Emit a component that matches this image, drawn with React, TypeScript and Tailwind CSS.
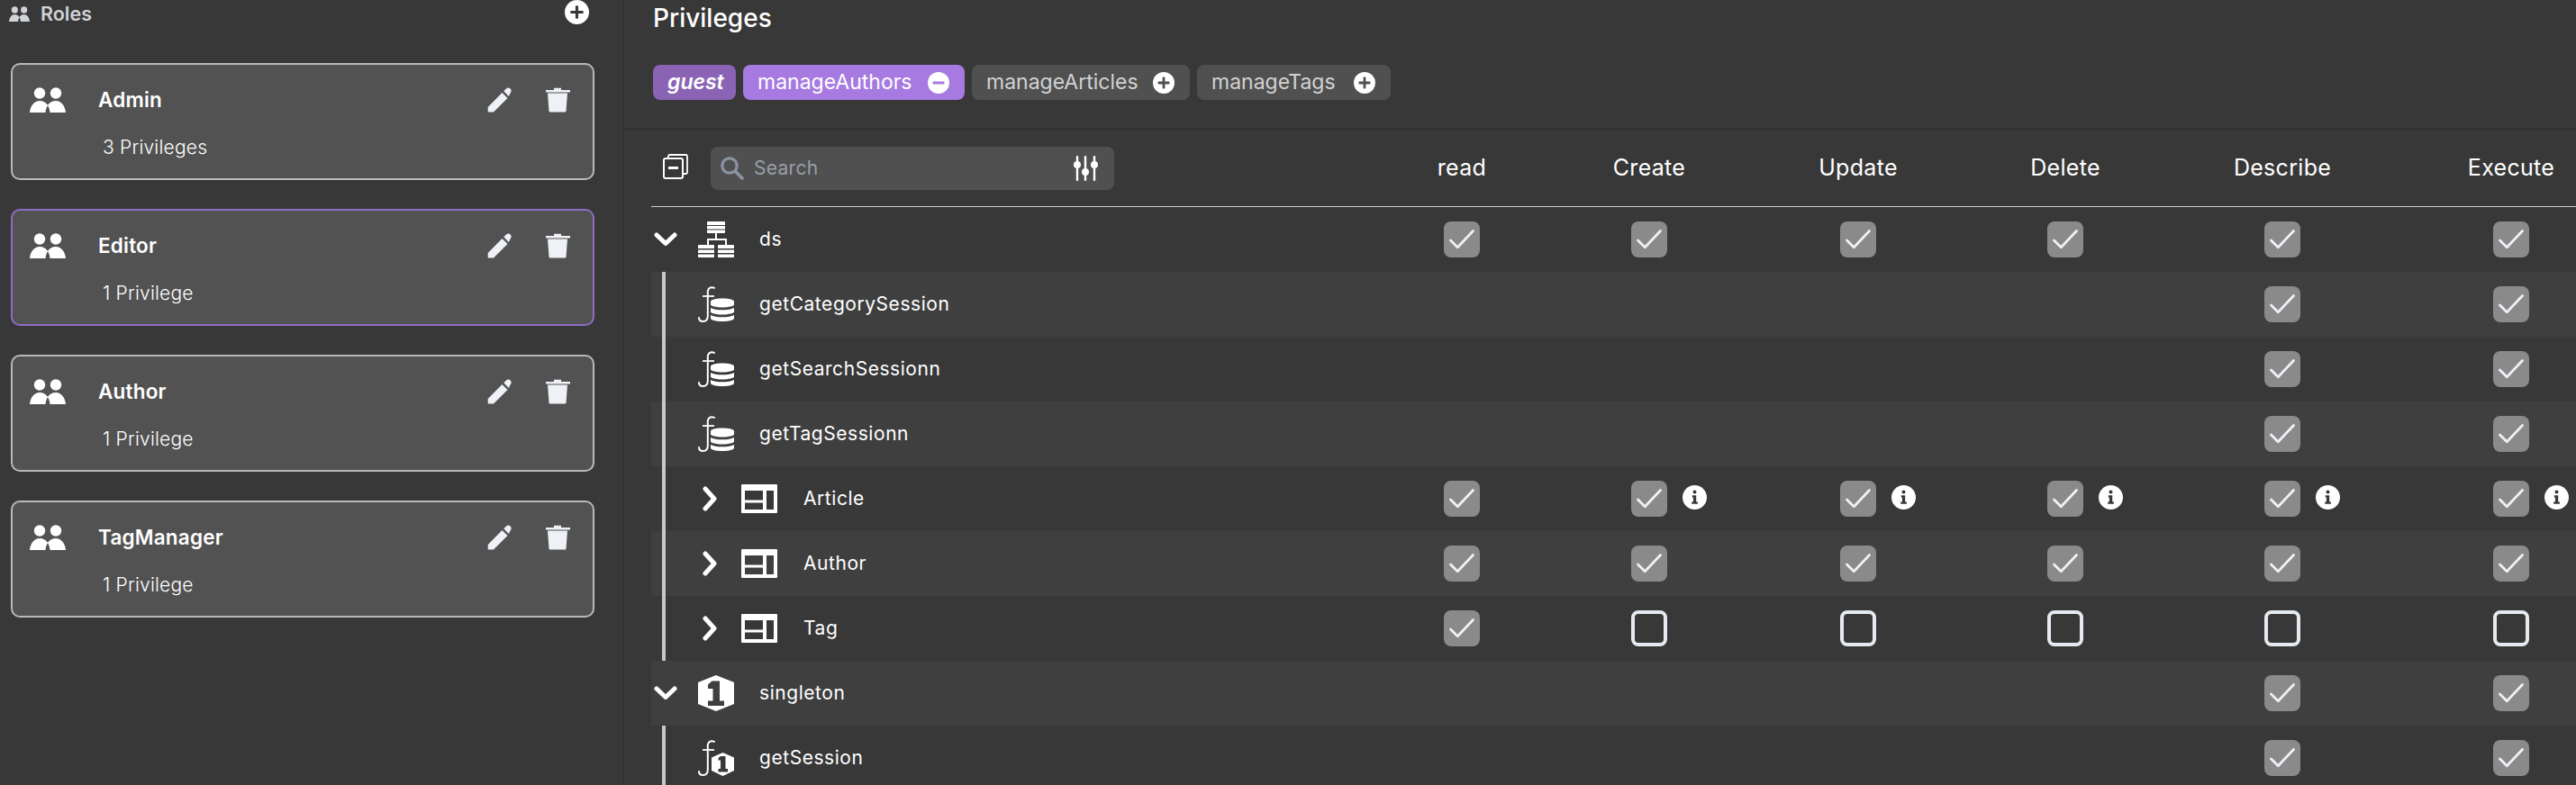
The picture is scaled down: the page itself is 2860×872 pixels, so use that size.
import React from "react";

const FONT = "font-['Inter','Noto_Sans',sans-serif]";

const Users = ({ className = "" }: { className?: string }) => (
  <svg viewBox="0 0 40 28" className={className} fill="currentColor" preserveAspectRatio="none">
    <circle cx="11" cy="6.500" r="6.200" />
    <circle cx="29" cy="6.500" r="6.200" />
    <path d="M0 28C.8 20.500 5 15 11 15c3.800 0 6.800 1.800 9 4.800C22.200 16.800 25.200 15 29 15c6 0 10.200 5.500 11 13H22.500c-.2-3-1-5.500-2.500-7.800-1.500 2.300-2.300 4.800-2.500 7.800Z" />
  </svg>
);

const Pencil = () => (
  <svg viewBox="0 0 28 28" className="w-[28px] h-[28px] text-[#eef1f6]" fill="currentColor">
    <path d="M.7 22 16.500 6l6 6L7 27.500H1.500a.8.8 0 0 1-.8-.8Z" />
    <path d="M18.300 4.200 21 1.500c1.500-1.400 3.300-1.200 4.600.1 1.300 1.400 1.500 3.200.1 4.700L23.800 10Z" />
  </svg>
);

const Trash = () => (
  <svg viewBox="0 0 28 28" className="w-[28px] h-[28px] text-[#eef1f6]" fill="currentColor">
    <path d="M10 .7h8V3h10v2.500H1V3h9Z" />
    <path d="M3 6.500h22l-1.500 20c-.1.600-.5 1-1.200 1H5.700c-.7 0-1.100-.4-1.200-1Z" />
  </svg>
);

const CircleBtn = ({ minus, color = "#505050", className = "" }: { minus?: boolean; color?: string; className?: string }) => (
  <svg viewBox="0 0 26 26" className={className}>
    <circle cx="13" cy="13" r="13" fill="#fff" />
    <rect x="6" y="11.500" width="14" height="3" rx="1" fill={color} />
    {!minus && <rect x="11.500" y="6" width="3" height="14" rx="1" fill={color} />}
  </svg>
);

const Check = () => (
  <svg viewBox="0 0 40 40" className="w-[40px] h-[40px]">
    <polyline points="7.500,21 15.300,28.800 32.500,10.500" fill="none" stroke="#eef1f6" strokeWidth="2.800" strokeLinecap="round" strokeLinejoin="round" />
  </svg>
);

const Info = () => (
  <svg viewBox="0 0 27 27" className="w-[27px] h-[27px]">
    <circle cx="13.500" cy="13.500" r="13.500" fill="#fff" />
    <circle cx="13.500" cy="7.500" r="2" fill="#383838" />
    <path d="M10.800 11.200h4.400v7.400h1.700v2.200h-6.700v-2.200h1.700v-5.200h-1.100Z" fill="#383838" />
  </svg>
);

const Cb = ({ on = true, info = false }: { on?: boolean; info?: boolean }) => (
  <div className="relative w-[40px] h-[40px]">
    {on ? (
      <div className="w-[40px] h-[40px] rounded-[8px] bg-[#8a8a8a]">
        <Check />
      </div>
    ) : (
      <div className="w-[40px] h-[40px] rounded-[8px] border-[4px] border-[#e5e9f0]" />
    )}
    {info && (
      <div className="absolute left-[57px] top-[5px]">
        <Info />
      </div>
    )}
  </div>
);

const FnStroke = () => (
  <>
    <path d="M18 1.800C15 .5 12 1.200 10.800 5V33c0 3.800-2 6-5.300 6C3 39 1 37.500 1 35" stroke="currentColor" strokeWidth="2" strokeLinecap="round" />
    <path d="M5 11h13" stroke="currentColor" strokeWidth="1.800" />
  </>
);

const FnDb = () => (
  <svg viewBox="0 0 40 40" className="w-[40px] h-[40px] text-white" fill="none">
    <FnStroke />
    <path d="M14 17c0-2 5.500-3.500 13-3.500S40 15 40 17v3.500c0 1.200-5.500 3-13 3s-13-1.800-13-3Z" fill="currentColor" />
    <path d="M14 24c3 1.700 7.500 2.300 13 2.300S37 25.700 40 24v4.500c0 1.200-5.500 3-13 3s-13-1.800-13-3Z" fill="currentColor" />
    <path d="M14 32c3 1.700 7.500 2.300 13 2.300S37 33.700 40 32v3.500c0 2-5.500 3.500-13 3.500s-13-1.500-13-3.500Z" fill="currentColor" />
  </svg>
);

const FnOne = () => (
  <svg viewBox="0 0 40 40" className="w-[40px] h-[40px] text-white" fill="none">
    <FnStroke />
    <path d="M27.500 14 40 19.500v14.500l-12.500 6L15 34V19.500Z" fill="currentColor" />
    <path d="M25 18h5.500v14h2.500v3.500H22.500V32H25v-9.500h-2.500V20Z" fill="#383838" />
  </svg>
);

const Hex = () => (
  <svg viewBox="0 0 40 40" className="w-[40px] h-[40px] text-white">
    <path d="M20 0 40 8v24l-20 8L0 32V8Z" fill="currentColor" />
    <path d="M15.500 6.500H24v22h5V34H11v-5.500h5.500V15H11v-4.500Z" fill="#3f3f3f" />
  </svg>
);

const TableIcon = () => (
  <svg viewBox="0 0 40 32" className="w-[40px] h-[32px] text-white">
    <path fillRule="evenodd" d="M1 0h38a1 1 0 0 1 1 1v30a1 1 0 0 1-1 1H1a1 1 0 0 1-1-1V1a1 1 0 0 1 1-1ZM4 7V17.500H24V7ZM4 20.500V28H24V20.500ZM28 7V28h8V7Z" fill="currentColor" />
  </svg>
);

const Chevron = ({ down = false }: { down?: boolean }) =>
  down ? (
    <svg viewBox="0 0 26 16" className="w-[26px] h-[16px]">
      <polyline points="3,3 13,12.500 23,3" fill="none" stroke="#fff" strokeWidth="5" strokeLinecap="round" strokeLinejoin="round" />
    </svg>
  ) : (
    <svg viewBox="0 0 16 28" className="w-[16px] h-[28px]">
      <polyline points="3,3 13,14 3,25" fill="none" stroke="#fff" strokeWidth="5" strokeLinecap="round" strokeLinejoin="round" />
    </svg>
  );

const DsIcon = () => (
  <svg viewBox="0 0 40 40" className="w-[40px] h-[40px] text-white" fill="currentColor">
    <path d="M10 1c0-.6.4-1 1-1h18c.6 0 1 .4 1 1v3H10ZM10 5h20v3.500H10ZM10 9.500h20V12c0 .6-.4 1-1 1H11c-.6 0-1-.4-1-1Z" />
    <path d="M19 13h2v6h11v7h-2v-5H12v5h-2v-7h9Z" />
    <path d="M0 27c0-.6.4-1 1-1h16c.6 0 1 .4 1 1v3H0ZM0 31.500h18V35H0ZM0 36.500h18V39c0 .6-.4 1-1 1H1c-.6 0-1-.4-1-1Z" />
    <path d="M22 27c0-.6.4-1 1-1h16c.6 0 1 .4 1 1v3H22ZM22 31.500h18V35H22ZM22 36.500h18V39c0 .6-.4 1-1 1H23c-.6 0-1-.4-1-1Z" />
  </svg>
);

const CopyMinus = () => (
  <svg viewBox="0 0 28 28" className="w-[28px] h-[28px] -mt-[4px]" fill="none" stroke="#fff">
    <path d="M6 4V2.500C6 1.700 6.700 1 7.500 1H25.500C26.300 1 27 1.700 27 2.500V20.500C27 21.300 26.300 22 25.500 22H22.500" strokeWidth="1.800" />
    <rect x="1" y="5" width="21" height="22" rx="2" strokeWidth="2" />
    <path d="M6 15.500h11" strokeWidth="3" />
  </svg>
);

const SearchIcon = () => (
  <svg viewBox="0 0 26 26" className="w-[26px] h-[26px]" fill="none" stroke="#8a93a3">
    <circle cx="10" cy="10" r="8.200" strokeWidth="3.200" />
    <path d="M16.500 16.500l7.500 7.500" strokeWidth="3.600" strokeLinecap="round" />
  </svg>
);

const Sliders = () => (
  <svg viewBox="0 0 28 28" className="w-[28px] h-[28px]" fill="#fff">
    <rect x="3.800" y="0" width="2.400" height="28" rx="1" />
    <rect x="12.800" y="0" width="2.400" height="28" rx="1" />
    <rect x="22.800" y="0" width="2.400" height="28" rx="1" />
    <circle cx="5" cy="10" r="4" />
    <circle cx="14" cy="18" r="4" />
    <circle cx="24" cy="10" r="4" />
  </svg>
);

const RoleCard = ({ name, count, active }: { name: string; count: string; active?: boolean }) => (
  <div className={`w-[648px] h-[130px] rounded-[10px] border-2 bg-[#525252] pl-[19px] pr-[25px] pt-[24px] ${active ? "border-[#8f6cc4]" : "border-[#b9b9b9]"}`}>
    <div className="flex items-center h-[30px] text-white">
      <Users className="w-[40px] h-[28px]" />
      <div className="ml-[36px] text-[22.5px] font-semibold tracking-[0.2px]">{name}</div>
      <div className="ml-auto flex items-center gap-[36px]">
        <Pencil />
        <Trash />
      </div>
    </div>
    <div className="mt-[23px] ml-[81px] text-[21px] font-light text-white leading-[30px] tracking-[0.2px]">{count}</div>
  </div>
);

const Chip = ({ label, on, italic, icon, w }: { label: string; on?: boolean; italic?: boolean; icon?: "plus" | "minus"; w: string }) => (
  <div className={`flex items-center h-[39px] rounded-[8px] pl-[16px] pr-[17px] text-[23px] ${w} ${italic ? "bg-[#8a63b5] text-white font-semibold italic" : on ? "bg-[#a67ae0] text-white" : "bg-[#505050] text-[#d2d2d2]"}`}>
    <span>{label}</span>
    {icon && <CircleBtn minus={icon === "minus"} color={on ? "#a67ae0" : "#505050"} className="ml-auto w-[24px] h-[24px]" />}
  </div>
);

const colClass = "grid grid-cols-[817px_166px_250px_214px_246px_236px_272px] items-center";

type Row = {
  label: string;
  kind: "fn" | "table" | "ds" | "hex" | "fn1";
  cells: (null | "on" | "off" | "info")[];
  sub?: boolean;
  light?: boolean;
};

const fnCells: Row["cells"] = [null, null, null, null, "on", "on"];
const rows: Row[] = [
  { label: "ds", kind: "ds", cells: ["on", "on", "on", "on", "on", "on"] },
  { label: "getCategorySession", kind: "fn", cells: fnCells, sub: true, light: true },
  { label: "getSearchSessionn", kind: "fn", cells: fnCells, sub: true },
  { label: "getTagSessionn", kind: "fn", cells: fnCells, sub: true, light: true },
  { label: "Article", kind: "table", cells: ["on", "info", "info", "info", "info", "info"], sub: true },
  { label: "Author", kind: "table", cells: ["on", "on", "on", "on", "on", "on"], sub: true, light: true },
  { label: "Tag", kind: "table", cells: ["on", "off", "off", "off", "off", "off"], sub: true },
  { label: "singleton", kind: "hex", cells: fnCells, light: true },
  { label: "getSession", kind: "fn1", cells: fnCells, sub: true },
];

const TreeRow = ({ r }: { r: Row }) => (
  <div className={`${colClass} h-[72px] ${r.light ? "bg-[#3f3f3f]" : ""}`}>
    <div className="relative flex items-center h-[72px] text-[21px] text-white tracking-[0.55px]">
      {r.sub && <div className="absolute left-[12px] top-0 bottom-0 w-[4px] bg-[#c8c8c8]" />}
      {r.kind === "ds" || r.kind === "hex" ? (
        <>
          <div className="ml-[3px] w-[26px] flex"><Chevron down /></div>
          <div className="ml-[23px]">{r.kind === "ds" ? <DsIcon /> : <Hex />}</div>
          <div className="ml-[28px]">{r.label}</div>
        </>
      ) : r.kind === "table" ? (
        <>
          <div className="ml-[57px] w-[16px] flex"><Chevron /></div>
          <div className="ml-[27px]"><TableIcon /></div>
          <div className="ml-[29px]">{r.label}</div>
        </>
      ) : (
        <>
          <div className="ml-[52px]">{r.kind === "fn" ? <FnDb /> : <FnOne />}</div>
          <div className="ml-[28px]">{r.label}</div>
        </>
      )}
    </div>
    {r.cells.map((c, i) => (
      <div key={i} className="flex justify-center">
        {c && <Cb on={c !== "off"} info={c === "info"} />}
      </div>
    ))}
  </div>
);

export default function App() {
  return (
    <div className={`w-[2860px] h-[872px] overflow-hidden flex bg-[#383838] ${FONT}`}>
      <aside className="w-[693px] h-full shrink-0 border-r border-[#2e2e2e] pl-[12px] flex flex-col">
        <div className="flex items-center h-[30px] text-[#d0d3d8]">
          <Users className="-ml-[2px] w-[23px] h-[17px]" />
          <span className="ml-[12px] text-[21.5px] font-semibold">Roles</span>
          <CircleBtn color="#383838" className="ml-auto mr-[38px] mb-[4px] w-[27px] h-[27px]" />
        </div>
        <div className="mt-[40px] flex flex-col gap-[32px]">
          <RoleCard name="Admin" count="3 Privileges" />
          <RoleCard name="Editor" count="1 Privilege" active />
          <RoleCard name="Author" count="1 Privilege" />
          <RoleCard name="TagManager" count="1 Privilege" />
        </div>
      </aside>
      <main className="flex-1 min-w-0">
        <div className="h-[144px] border-b border-[#2a2a2a] pl-[32px] pt-[2px]">
          <div className="text-[28px] font-medium text-white leading-[36px]">Privileges</div>
          <div className="mt-[34px] flex gap-[8px]">
            <Chip label="guest" italic w="w-[92px]" />
            <Chip label="manageAuthors" on icon="minus" w="w-[246px]" />
            <Chip label="manageArticles" icon="plus" w="w-[242px]" />
            <Chip label="manageTags" icon="plus" w="w-[215px]" />
          </div>
        </div>
        <div className="ml-[30px]">
          <div className={`${colClass} h-[86px] border-b border-[#d0d0d0] text-white text-[25px] tracking-[0.3px]`}>
            <div className="flex items-center pl-[13px]">
              <CopyMinus />
              <div className="ml-[25px] w-[448px] h-[48px] bg-[#505050] rounded-[8px] flex items-center pl-[11px] pr-[18px]">
                <SearchIcon />
                <span className="ml-[11px] text-[21px] text-[#9a9fa8]">Search</span>
                <div className="ml-auto"><Sliders /></div>
              </div>
            </div>
            {["read", "Create", "Update", "Delete", "Describe", "Execute"].map((h) => (
              <div key={h} className="text-center">{h}</div>
            ))}
          </div>
          {rows.map((r) => (
            <TreeRow key={r.label} r={r} />
          ))}
        </div>
      </main>
    </div>
  );
}
